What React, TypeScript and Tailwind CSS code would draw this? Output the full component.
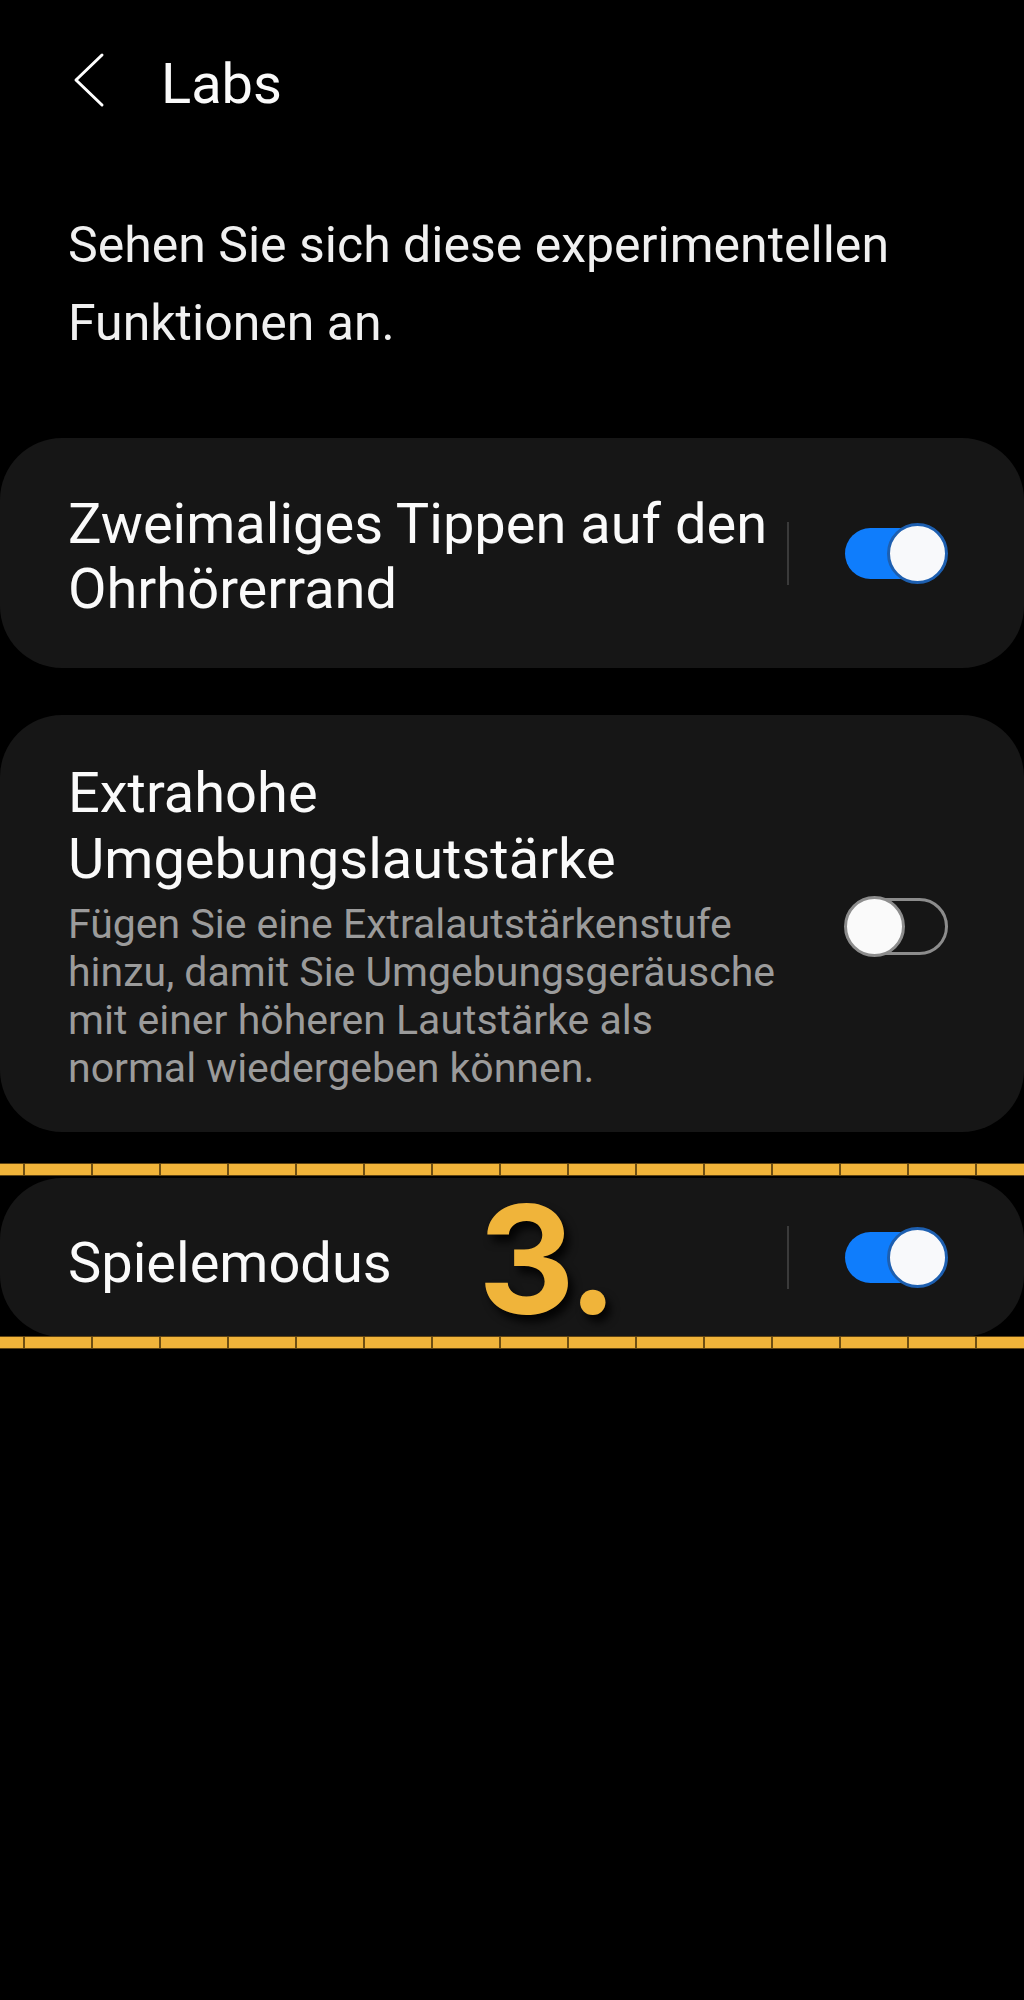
import React from "react"

function Toggle({ on }: { on: boolean }) {
  return (
    <div className="relative w-[104px] h-[61px] shrink-0">
      {on ? (
        <>
          <div className="absolute left-[1px] top-[5px] w-[96px] h-[51px] rounded-full bg-[#0f7dfc]" />
          <div className="absolute right-0 top-0 w-[61px] h-[61px] rounded-full bg-[#f8f9fb] border-[3px] border-[#1d5fb0]" />
        </>
      ) : (
        <>
          <div className="absolute left-[4px] top-[2px] w-[100px] h-[57px] rounded-full border-[3px] border-[#8c8c8c]" />
          <div className="absolute left-0 top-0 w-[61px] h-[61px] rounded-full bg-[#fafafa] border-[3px] border-[#8c8c8c]" />
        </>
      )}
    </div>
  )
}

function Divider() {
  return <div className="w-[2px] h-[63px] bg-[#3a3a3a] shrink-0" />
}

function Band() {
  return (
    <div className="h-[13px] w-full bg-[#f1b43a] border-y border-[#5e4312] bg-[repeating-linear-gradient(90deg,transparent_0px,transparent_23px,#6e4f14_23px,#6e4f14_25px,transparent_25px,transparent_68px)]" />
  )
}

export default function App() {
  return (
    <main className="min-h-[2000px] bg-black pt-[50px] text-white font-['Roboto','Liberation_Sans',sans-serif]">
      <div className="flex items-center h-[68px] pl-[73px]">
        <svg width="32" height="56" viewBox="0 0 32 56" fill="none" className="-mt-[8px] shrink-0">
          <polyline points="29,3 3,28 29,53" stroke="#ffffff" strokeWidth="3" strokeLinecap="round" strokeLinejoin="round" />
        </svg>
        <h1 className="ml-[56px] text-[56px] leading-[68px] text-[#fafafa]">Labs</h1>
      </div>

      <p className="mt-[88px] pl-[68px] text-[50px] leading-[78px] text-[#f0f0f0]">
        Sehen Sie sich diese experimentellen
        <br />
        Funktionen an.
      </p>

      <div className="mt-[76px] flex flex-col gap-[47px]">
        <div className="flex items-center rounded-[62px] bg-[#161616] pl-[68px] pr-[76px] py-[50px]">
          <div className="flex-1 mr-[16px] mt-[4px] -mb-[4px] text-[56px] leading-[65px] text-[#fafafa] whitespace-nowrap">
            Zweimaliges Tippen auf den
            <br />
            Ohrhörerrand
          </div>
          <Divider />
          <div className="ml-[55px]">
            <Toggle on />
          </div>
        </div>

        <div className="flex items-center rounded-[62px] bg-[#161616] pl-[68px] pr-[76px] pt-[45px] pb-[40px]">
          <div className="flex-1 mr-[16px]">
            <div className="text-[56px] leading-[66px] text-[#fafafa] whitespace-nowrap">
              Extrahohe
              <br />
              Umgebungslautstärke
            </div>
            <div className="mt-[8px] text-[41px] leading-[48px] text-[#9b9b9b] whitespace-nowrap">
              Fügen Sie eine Extralautstärkenstufe
              <br />
              hinzu, damit Sie Umgebungsgeräusche
              <br />
              mit einer höheren Lautstärke als
              <br />
              normal wiedergeben können.
            </div>
          </div>
          <Toggle on={false} />
        </div>

        <div className="relative -mt-[1px]">
          <div className="absolute left-0 right-0 -top-[15px]">
            <Band />
          </div>
          <div className="relative flex items-center h-[159px] rounded-[62px] bg-[#161616] pl-[68px] pr-[76px]">
            <div className="flex-1 mr-[16px] pt-[12px] text-[56px] leading-[65px] text-[#fafafa]">Spielemodus</div>
            <Divider />
            <div className="ml-[55px]">
              <Toggle on />
            </div>
            <span className="absolute left-[478px] top-[7px] font-['Inter',sans-serif] font-bold text-[150px] leading-none tracking-[-4px] text-[#f0b43a] [text-shadow:5px_7px_8px_rgba(0,0,0,0.85)]">
              3.
            </span>
          </div>
          <div className="absolute left-0 right-0 -bottom-[12px]">
            <Band />
          </div>
        </div>
      </div>
    </main>
  )
}
